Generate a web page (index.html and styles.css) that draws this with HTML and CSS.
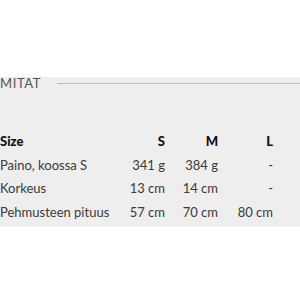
FILE: index.html
```html
<!DOCTYPE html>
<html lang="fi">
<head>
<meta charset="utf-8">
<link rel="stylesheet" href="styles.css">
</head>
<body>
<div class="top"></div>
<section class="section">
  <div class="heading"><span class="title">MITAT</span><span class="rule"></span></div>
  <div class="table">
    <div class="row head"><div class="label">Size</div><div class="cell">S</div><div class="cell">M</div><div class="cell">L</div></div>
    <div class="row"><div class="label">Paino, koossa S</div><div class="cell">341 g</div><div class="cell">384 g</div><div class="cell">-</div></div>
    <div class="row"><div class="label">Korkeus</div><div class="cell">13 cm</div><div class="cell">14 cm</div><div class="cell">-</div></div>
    <div class="row"><div class="label">Pehmusteen pituus</div><div class="cell">57 cm</div><div class="cell">70 cm</div><div class="cell">80 cm</div></div>
  </div>
</section>
</body>
</html>
```
FILE: styles.css
```css
html, body {
  margin: 0;
  background: #ffffff;
}
body {
  font-family: Lato, "Open Sans", sans-serif;
  color: #3a3a3a;
}
.top {
  height: 77px;
}
.section {
  background: #eeeeee;
  padding-bottom: 3px;
}
.heading {
  display: flex;
  align-items: center;
  height: 12px;
  line-height: 12px;
  font-size: 13px;
  letter-spacing: 0.6px;
  color: #555555;
}
.rule {
  flex: 1;
  height: 1px;
  margin-left: 16px;
  background: #bbbbbb;
}
.table {
  margin-top: 41px;
  font-size: 13px;
}
.row {
  display: grid;
  grid-template-columns: 112px 53px 53px 55px;
  line-height: 23.5px;
}
.cell {
  text-align: right;
}
.head {
  font-weight: 900;
  color: #111111;
}
```
